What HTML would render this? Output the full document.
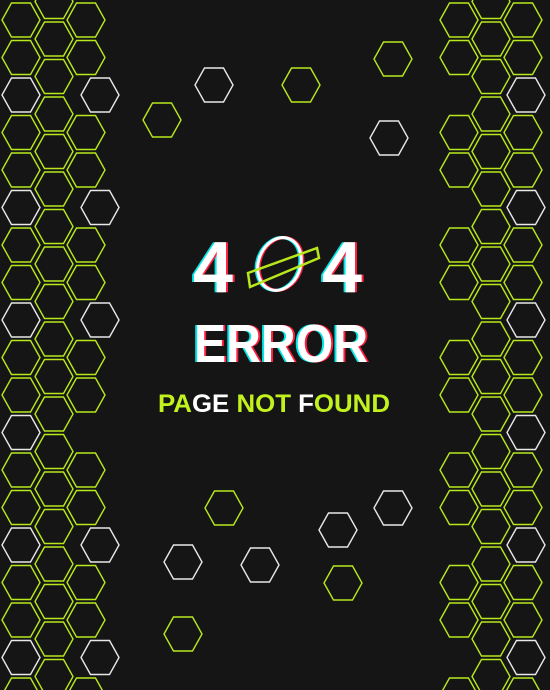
<!DOCTYPE html>
<html><head><meta charset="utf-8"><style>
html,body{margin:0;padding:0;background:#151515;width:550px;height:690px;overflow:hidden}
svg{display:block}
</style></head><body>
<svg width="550" height="690" viewBox="0 0 550 690" xmlns="http://www.w3.org/2000/svg" xmlns:xlink="http://www.w3.org/1999/xlink">
<defs>
<polygon id="h" points="-19,0 -9.5,-17 9.5,-17 19,0 9.5,17 -9.5,17" fill="none" stroke-width="1.4"/>
</defs>
<rect width="550" height="690" fill="#151515"/>
<!-- left col A -->
<g stroke="#b8e81c">
<use xlink:href="#h" x="21" y="20"/><use xlink:href="#h" x="21" y="57.5"/><use xlink:href="#h" x="21" y="132.5"/><use xlink:href="#h" x="21" y="170"/><use xlink:href="#h" x="21" y="245"/><use xlink:href="#h" x="21" y="282.5"/><use xlink:href="#h" x="21" y="357.5"/><use xlink:href="#h" x="21" y="395"/><use xlink:href="#h" x="21" y="470"/><use xlink:href="#h" x="21" y="507.5"/><use xlink:href="#h" x="21" y="582.5"/><use xlink:href="#h" x="21" y="620"/><use xlink:href="#h" x="21" y="695"/>
<!-- left col B -->
<use xlink:href="#h" x="54" y="1.5"/><use xlink:href="#h" x="54" y="39"/><use xlink:href="#h" x="54" y="76.5"/><use xlink:href="#h" x="54" y="114"/><use xlink:href="#h" x="54" y="151.5"/><use xlink:href="#h" x="54" y="189"/><use xlink:href="#h" x="54" y="226.5"/><use xlink:href="#h" x="54" y="264"/><use xlink:href="#h" x="54" y="301.5"/><use xlink:href="#h" x="54" y="339"/><use xlink:href="#h" x="54" y="376.5"/><use xlink:href="#h" x="54" y="414"/><use xlink:href="#h" x="54" y="451.5"/><use xlink:href="#h" x="54" y="489"/><use xlink:href="#h" x="54" y="526.5"/><use xlink:href="#h" x="54" y="564"/><use xlink:href="#h" x="54" y="601.5"/><use xlink:href="#h" x="54" y="639"/><use xlink:href="#h" x="54" y="676.5"/>
<!-- left col C -->
<use xlink:href="#h" x="86" y="20"/><use xlink:href="#h" x="86" y="57.5"/><use xlink:href="#h" x="86" y="132.5"/><use xlink:href="#h" x="86" y="170"/><use xlink:href="#h" x="86" y="245"/><use xlink:href="#h" x="86" y="282.5"/><use xlink:href="#h" x="86" y="357.5"/><use xlink:href="#h" x="86" y="395"/><use xlink:href="#h" x="86" y="470"/><use xlink:href="#h" x="86" y="507.5"/><use xlink:href="#h" x="86" y="582.5"/><use xlink:href="#h" x="86" y="620"/><use xlink:href="#h" x="86" y="695"/>
<!-- right col A -->
<use xlink:href="#h" x="459" y="20"/><use xlink:href="#h" x="459" y="57.5"/><use xlink:href="#h" x="459" y="132.5"/><use xlink:href="#h" x="459" y="170"/><use xlink:href="#h" x="459" y="245"/><use xlink:href="#h" x="459" y="282.5"/><use xlink:href="#h" x="459" y="357.5"/><use xlink:href="#h" x="459" y="395"/><use xlink:href="#h" x="459" y="470"/><use xlink:href="#h" x="459" y="507.5"/><use xlink:href="#h" x="459" y="582.5"/><use xlink:href="#h" x="459" y="620"/><use xlink:href="#h" x="459" y="695"/>
<!-- right col B -->
<use xlink:href="#h" x="491" y="1.5"/><use xlink:href="#h" x="491" y="39"/><use xlink:href="#h" x="491" y="76.5"/><use xlink:href="#h" x="491" y="114"/><use xlink:href="#h" x="491" y="151.5"/><use xlink:href="#h" x="491" y="189"/><use xlink:href="#h" x="491" y="226.5"/><use xlink:href="#h" x="491" y="264"/><use xlink:href="#h" x="491" y="301.5"/><use xlink:href="#h" x="491" y="339"/><use xlink:href="#h" x="491" y="376.5"/><use xlink:href="#h" x="491" y="414"/><use xlink:href="#h" x="491" y="451.5"/><use xlink:href="#h" x="491" y="489"/><use xlink:href="#h" x="491" y="526.5"/><use xlink:href="#h" x="491" y="564"/><use xlink:href="#h" x="491" y="601.5"/><use xlink:href="#h" x="491" y="639"/><use xlink:href="#h" x="491" y="676.5"/>
<!-- right col C -->
<use xlink:href="#h" x="523" y="20"/><use xlink:href="#h" x="523" y="57.5"/><use xlink:href="#h" x="523" y="132.5"/><use xlink:href="#h" x="523" y="170"/><use xlink:href="#h" x="523" y="245"/><use xlink:href="#h" x="523" y="282.5"/><use xlink:href="#h" x="523" y="357.5"/><use xlink:href="#h" x="523" y="395"/><use xlink:href="#h" x="523" y="470"/><use xlink:href="#h" x="523" y="507.5"/><use xlink:href="#h" x="523" y="582.5"/><use xlink:href="#h" x="523" y="620"/><use xlink:href="#h" x="523" y="695"/>
<!-- scattered green -->
<use xlink:href="#h" x="393" y="59"/><use xlink:href="#h" x="301" y="85"/><use xlink:href="#h" x="162" y="120"/><use xlink:href="#h" x="224" y="508"/><use xlink:href="#h" x="343" y="583"/><use xlink:href="#h" x="183" y="634"/>
</g>
<g stroke="#e8e8e8">
<use xlink:href="#h" x="21" y="95"/><use xlink:href="#h" x="21" y="207.5"/><use xlink:href="#h" x="21" y="320"/><use xlink:href="#h" x="21" y="432.5"/><use xlink:href="#h" x="21" y="545"/><use xlink:href="#h" x="21" y="657.5"/>
<use xlink:href="#h" x="100" y="95"/><use xlink:href="#h" x="100" y="207.5"/><use xlink:href="#h" x="100" y="320"/><use xlink:href="#h" x="100" y="545"/><use xlink:href="#h" x="100" y="657.5"/>
<use xlink:href="#h" x="526" y="95"/><use xlink:href="#h" x="526" y="207.5"/><use xlink:href="#h" x="526" y="320"/><use xlink:href="#h" x="526" y="432.5"/><use xlink:href="#h" x="526" y="545"/><use xlink:href="#h" x="526" y="657.5"/>
<use xlink:href="#h" x="214" y="85"/><use xlink:href="#h" x="389" y="138"/><use xlink:href="#h" x="393" y="508"/><use xlink:href="#h" x="338" y="530"/><use xlink:href="#h" x="183" y="562"/><use xlink:href="#h" x="260" y="565"/>
</g>
<g font-family="Liberation Sans, sans-serif" font-weight="bold">
 <text x="191" y="292" font-size="72" fill="#00e5e5" textLength="40" lengthAdjust="spacingAndGlyphs">4</text>
 <text x="195" y="292" font-size="72" fill="#ff2040" textLength="40" lengthAdjust="spacingAndGlyphs">4</text>
 <text x="193" y="292" font-size="72" fill="#fff" textLength="40" lengthAdjust="spacingAndGlyphs">4</text>
 <text x="320" y="292" font-size="72" fill="#00e5e5" textLength="40" lengthAdjust="spacingAndGlyphs">4</text>
 <text x="324" y="292" font-size="72" fill="#ff2040" textLength="40" lengthAdjust="spacingAndGlyphs">4</text>
 <text x="322" y="292" font-size="72" fill="#fff" textLength="40" lengthAdjust="spacingAndGlyphs">4</text>
 <ellipse cx="278" cy="264" rx="21" ry="27" transform="rotate(20 278 264)" fill="none" stroke="#00e5e5" stroke-width="3"/>
 <ellipse cx="281" cy="264" rx="21" ry="27" transform="rotate(20 281 264)" fill="none" stroke="#ff2040" stroke-width="3"/>
 <ellipse cx="279.5" cy="264" rx="21" ry="27" transform="rotate(20 279.5 264)" fill="none" stroke="#fff" stroke-width="3"/>
 <polygon points="248,273 317,248 319,258 250,287" fill="none" stroke="#b8e81c" stroke-width="2.5"/>
 <text x="192" y="362" font-size="54" fill="#00e5e5" textLength="174" lengthAdjust="spacingAndGlyphs">ERROR</text>
 <text x="196" y="362" font-size="54" fill="#ff2040" textLength="174" lengthAdjust="spacingAndGlyphs">ERROR</text>
 <text x="194" y="362" font-size="54" fill="#fff" textLength="174" lengthAdjust="spacingAndGlyphs">ERROR</text>
 <text x="158" y="412" font-size="25" textLength="232" lengthAdjust="spacingAndGlyphs"><tspan fill="#c2f21e">PA</tspan><tspan fill="#fff">GE</tspan><tspan fill="#c2f21e"> NOT </tspan><tspan fill="#fff">F</tspan><tspan fill="#c2f21e">OUND</tspan></text>
</g>
</svg>
</body></html>
